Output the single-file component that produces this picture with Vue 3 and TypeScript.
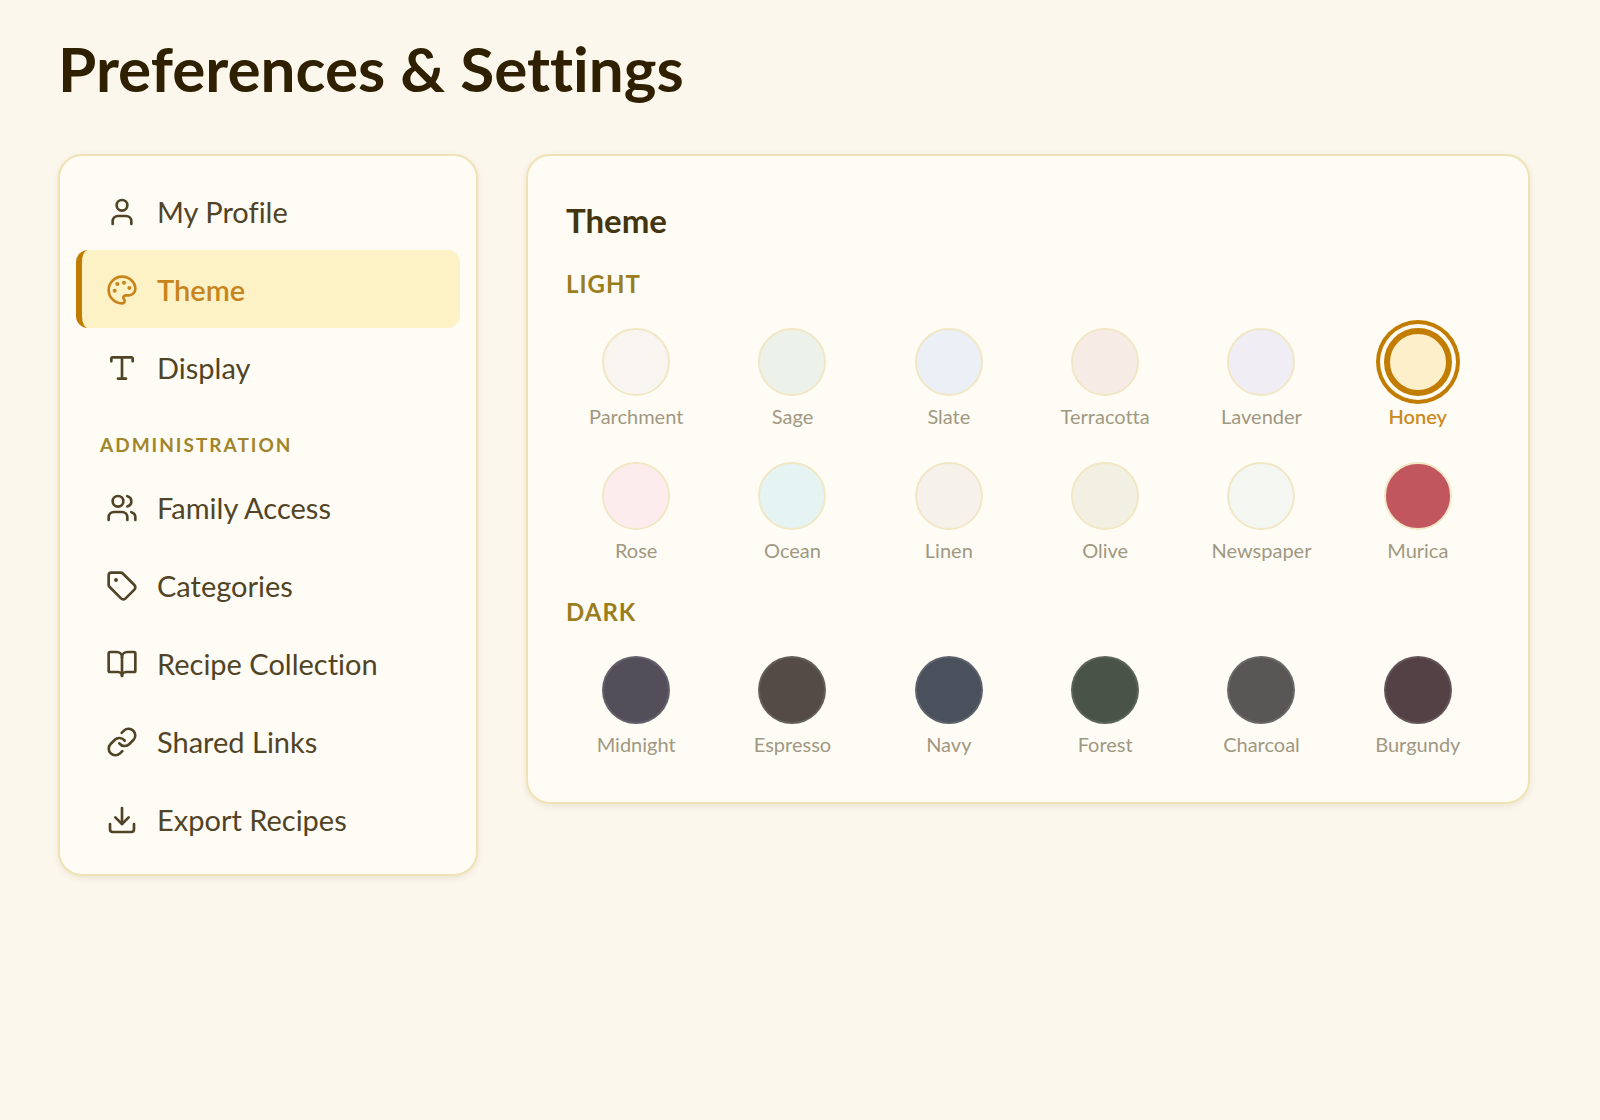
<script setup lang="ts">
import { ref } from 'vue'

type IconName = 'user' | 'palette' | 'type' | 'users' | 'tag' | 'book' | 'link' | 'download'

interface NavItem {
  id: string
  label: string
  icon: IconName
}

interface Swatch {
  name: string
  color: string
}

const icons: Record<IconName, string[]> = {
  user: ['M19 21v-2a4 4 0 0 0-4-4H9a4 4 0 0 0-4 4v2', 'M8 7a4 4 0 1 0 8 0a4 4 0 1 0-8 0'],
  palette: [
    'M12 22a1 1 0 0 1 0-20 10 9 0 0 1 10 9 5 5 0 0 1-5 5h-2.25a1.75 1.75 0 0 0-1.4 2.8l.3.4a1.75 1.75 0 0 1-1.4 2.8z',
    'M13 6.5a.5.5 0 1 0 1 0a.5.5 0 1 0-1 0',
    'M17 10.5a.5.5 0 1 0 1 0a.5.5 0 1 0-1 0',
    'M6 12.5a.5.5 0 1 0 1 0a.5.5 0 1 0-1 0',
    'M8 7.5a.5.5 0 1 0 1 0a.5.5 0 1 0-1 0',
  ],
  type: ['M12 4v16', 'M4 7V5a1 1 0 0 1 1-1h14a1 1 0 0 1 1 1v2', 'M9 20h6'],
  users: [
    'M16 21v-2a4 4 0 0 0-4-4H6a4 4 0 0 0-4 4v2',
    'M16 3.128a4 4 0 0 1 0 7.744',
    'M22 21v-2a4 4 0 0 0-3-3.87',
    'M5 7a4 4 0 1 0 8 0a4 4 0 1 0-8 0',
  ],
  tag: [
    'M12.586 2.586A2 2 0 0 0 11.172 2H4a2 2 0 0 0-2 2v7.172a2 2 0 0 0 .586 1.414l8.704 8.704a2.426 2.426 0 0 0 3.42 0l6.58-6.58a2.426 2.426 0 0 0 0-3.42z',
    'M7 7.5a.5.5 0 1 0 1 0a.5.5 0 1 0-1 0',
  ],
  book: [
    'M12 7v14',
    'M3 18a1 1 0 0 1-1-1V4a1 1 0 0 1 1-1h5a4 4 0 0 1 4 4 4 4 0 0 1 4-4h5a1 1 0 0 1 1 1v13a1 1 0 0 1-1 1h-6a3 3 0 0 0-3 3 3 3 0 0 0-3-3z',
  ],
  link: [
    'M10 13a5 5 0 0 0 7.54.54l3-3a5 5 0 0 0-7.07-7.07l-1.72 1.71',
    'M14 11a5 5 0 0 0-7.54-.54l-3 3a5 5 0 0 0 7.07 7.07l1.71-1.71',
  ],
  download: ['M12 15V3', 'M21 15v4a2 2 0 0 1-2 2H5a2 2 0 0 1-2-2v-4', 'm7 10 5 5 5-5'],
}

const navGroups: { title: string; items: NavItem[] }[] = [
  {
    title: '',
    items: [
      { id: 'profile', label: 'My Profile', icon: 'user' },
      { id: 'theme', label: 'Theme', icon: 'palette' },
      { id: 'display', label: 'Display', icon: 'type' },
    ],
  },
  {
    title: 'Administration',
    items: [
      { id: 'family', label: 'Family Access', icon: 'users' },
      { id: 'categories', label: 'Categories', icon: 'tag' },
      { id: 'collection', label: 'Recipe Collection', icon: 'book' },
      { id: 'links', label: 'Shared Links', icon: 'link' },
      { id: 'export', label: 'Export Recipes', icon: 'download' },
    ],
  },
]

const themeGroups: { title: string; dark: boolean; swatches: Swatch[] }[] = [
  {
    title: 'Light',
    dark: false,
    swatches: [
      { name: 'Parchment', color: '#f8f5f1' },
      { name: 'Sage', color: '#ecf2ea' },
      { name: 'Slate', color: '#ebeff6' },
      { name: 'Terracotta', color: '#f7ece5' },
      { name: 'Lavender', color: '#f0edf5' },
      { name: 'Honey', color: '#fcefc9' },
      { name: 'Rose', color: '#fdecee' },
      { name: 'Ocean', color: '#e5f4f3' },
      { name: 'Linen', color: '#f6f1eb' },
      { name: 'Olive', color: '#f2f0e3' },
      { name: 'Newspaper', color: '#f4f6f2' },
      { name: 'Murica', color: '#c2565f' },
    ],
  },
  {
    title: 'Dark',
    dark: true,
    swatches: [
      { name: 'Midnight', color: '#524f5b' },
      { name: 'Espresso', color: '#544b47' },
      { name: 'Navy', color: '#4a505c' },
      { name: 'Forest', color: '#495347' },
      { name: 'Charcoal', color: '#595755' },
      { name: 'Burgundy', color: '#534146' },
    ],
  },
]

const activeSection = ref('theme')
const activeTheme = ref('Honey')
</script>

<template>
  <main class="page">
    <h1 class="page-title">Preferences &amp; Settings</h1>
    <div class="layout">
      <nav class="card sidebar" aria-label="Settings">
        <template v-for="group in navGroups" :key="group.title">
          <h2 v-if="group.title" class="nav-heading">{{ group.title }}</h2>
          <button
            v-for="item in group.items"
            :key="item.id"
            type="button"
            class="nav-item"
            :class="{ active: item.id === activeSection }"
            @click="activeSection = item.id"
          >
            <svg class="icon" viewBox="0 0 24 24" aria-hidden="true">
              <path v-for="d in icons[item.icon]" :key="d" :d="d" />
            </svg>
            <span>{{ item.label }}</span>
          </button>
        </template>
      </nav>

      <section class="card panel">
        <h2 class="panel-title">Theme</h2>
        <div v-for="group in themeGroups" :key="group.title" class="theme-group">
          <h3 class="group-title">{{ group.title }}</h3>
          <div class="swatches">
            <button
              v-for="swatch in group.swatches"
              :key="swatch.name"
              type="button"
              class="swatch"
              :class="{ selected: swatch.name === activeTheme, dark: group.dark }"
              :aria-pressed="swatch.name === activeTheme"
              @click="activeTheme = swatch.name"
            >
              <span class="dot" :style="{ backgroundColor: swatch.color }"></span>
              <span class="swatch-name">{{ swatch.name }}</span>
            </button>
          </div>
        </div>
      </section>
    </div>
  </main>
</template>

<style>
body {
  background: #fcf7ec;
}
</style>

<style scoped>
.page {
  box-sizing: border-box;
  padding: 28px 70px 48px 58px;
  font-family: Lato, "Open Sans", sans-serif;
  font-variant-ligatures: none;
  color: #2e2000;
}

h1,
h2,
h3 {
  margin: 0;
}

button {
  margin: 0;
  background: none;
  border: 0;
  font: inherit;
  font-variant-ligatures: inherit;
  cursor: pointer;
}

.page-title {
  margin-bottom: 46px;
  font-size: 62px;
  line-height: 80px;
  font-weight: 700;
}

.layout {
  display: grid;
  grid-template-columns: 420px minmax(0, 1fr);
  gap: 48px;
  align-items: start;
}

.card {
  box-sizing: border-box;
  background: #fffcf5;
  border: 2px solid #f0e2b4;
  border-radius: 24px;
  box-shadow: 0 2px 6px rgba(80, 60, 0, 0.1);
}

.sidebar {
  display: flex;
  flex-direction: column;
  padding: 16px;
}

.nav-item {
  display: flex;
  align-items: center;
  gap: 19px;
  height: 78px;
  padding: 2px 24px 0;
  border-left: 6px solid transparent;
  border-radius: 12px;
  font-size: 29px;
  line-height: 40px;
  color: #514426;
  text-align: left;
}

.nav-item.active {
  background: #fdf1c6;
  border-left-color: #c27c00;
  color: #c8841a;
  font-weight: 600;
}

.icon {
  flex: none;
  width: 32px;
  height: 32px;
  fill: none;
  stroke: currentColor;
  stroke-width: 2;
  stroke-linecap: round;
  stroke-linejoin: round;
}

.nav-heading {
  padding: 25px 24px 9px;
  font-size: 19px;
  line-height: 28px;
  font-weight: 700;
  letter-spacing: 2px;
  text-transform: uppercase;
  color: #a0852a;
}

.panel {
  padding: 42px 40px 37px 38px;
}

.panel-title {
  font-size: 33px;
  line-height: 44px;
  font-weight: 700;
  color: #42350f;
}

.group-title {
  padding: 24px 0 19px;
  font-size: 24px;
  line-height: 34px;
  font-weight: 700;
  letter-spacing: 1px;
  text-transform: uppercase;
  color: #9a7d1c;
}

.panel-title + .theme-group {
  padding-top: 1px;
}

.swatches {
  display: grid;
  grid-template-columns: repeat(6, minmax(0, 1fr));
  gap: 17px 16px;
}

.swatch {
  display: flex;
  flex-direction: column;
  align-items: center;
  gap: 6px;
  height: 117px;
  padding: 8px 0;
  font-size: 20px;
  line-height: 28px;
  color: #a09882;
}

.dot {
  box-sizing: border-box;
  flex: none;
  width: 68px;
  height: 68px;
  border: 2px solid #f2e7c4;
  border-radius: 50%;
}

.swatch.dark .dot {
  border-color: rgba(255, 255, 255, 0.1);
}

.swatch.selected {
  color: #cb8a22;
  font-weight: 600;
}

.swatch.selected .dot {
  border: 6px solid #c27c00;
  box-shadow: 0 0 0 4px #fffcf5, 0 0 0 8px #c27c00;
}
</style>
